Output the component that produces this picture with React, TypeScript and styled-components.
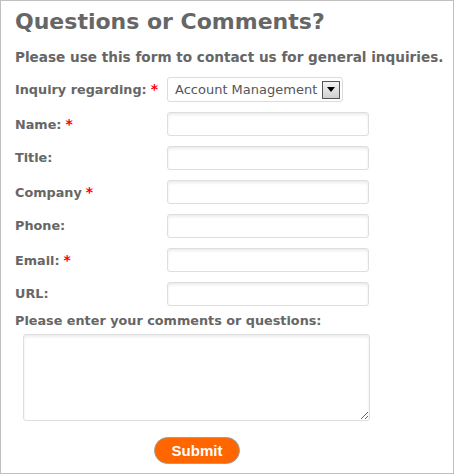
import React from "react";
import styled, { createGlobalStyle } from "styled-components";

const Global = createGlobalStyle`
  html, body { margin: 0; padding: 0; background: #fff; }
  * { box-sizing: border-box; }
`;

const Panel = styled.div`
  width: 454px;
  height: 474px;
  border: 1px solid #c0c0c0;
  padding: 8px 0 0 14px;
  font-family: "DejaVu Sans", Verdana, sans-serif;
  color: #666;
`;

const Heading = styled.h2`
  margin: 0;
  font-size: 22px;
  line-height: 26px;
  font-weight: bold;
`;

const Intro = styled.p`
  margin: 13px 0 0 0;
  font-size: 13.6px;
  line-height: 18px;
  font-weight: bold;
  white-space: nowrap;
`;

const Form = styled.form`
  display: grid;
  grid-template-columns: 152px 202px;
  row-gap: 10px;
  margin-top: 11px;
  align-items: center;
`;

const Label = styled.label`
  font-size: 12.8px;
  font-weight: bold;
  line-height: 16px;
  white-space: nowrap;
`;

const Req = styled.span`
  color: #f00;
  margin-left: 4px;
  font-size: 14px;
`;

const SelectBox = styled.div`
  width: 176px;
  height: 25px;
  border: 1px solid #dcdcdc;
  border-radius: 3px;
  display: flex;
  align-items: center;
  justify-content: space-between;
  padding: 0 2px 0 7px;
  font-size: 13px;
  color: #555;
  background: #fff;
`;

const Arrow = styled.span`
  width: 18px;
  height: 18px;
  border: 1px solid #555;
  background: linear-gradient(#f4f4f4, #d0d0d0);
  display: flex;
  align-items: center;
  justify-content: center;
`;

const Input = styled.input`
  width: 202px;
  height: 24px;
  border: 1px solid #dedede;
  border-radius: 3px;
  box-shadow: inset 0 2px 3px rgba(0, 0, 0, 0.08);
  background: #fff;
  font-family: inherit;
  outline: none;
`;

const CommentsLabel = styled(Label)`
  display: block;
  margin-top: 7px;
`;

const TextArea = styled.textarea`
  display: block;
  width: 347px;
  height: 87px;
  margin: 5px 0 0 8px;
  border: 1px solid #dedede;
  border-radius: 3px;
  box-shadow: inset 0 2px 3px rgba(0, 0, 0, 0.08);
  font-family: inherit;
  outline: none;
  resize: both;
`;

const ButtonRow = styled.div`
  padding: 16px 0 0 139px;
`;

const Submit = styled.button`
  display: block;
  width: 86px;
  height: 27px;
  border-radius: 14px;
  border: 1px solid #a0a0a0;
  background: #ff6600;
  color: #fff;
  font-family: "Liberation Sans", Arial, sans-serif;
  font-weight: bold;
  font-size: 15px;
  padding: 0;
  cursor: pointer;
`;

const fields: { label: string; req: boolean; colon: boolean }[] = [
  { label: "Name", req: true, colon: true },
  { label: "Title", req: false, colon: true },
  { label: "Company", req: true, colon: false },
  { label: "Phone", req: false, colon: true },
  { label: "Email", req: true, colon: true },
  { label: "URL", req: false, colon: true },
];

export default function App() {
  return (
    <>
      <Global />
      <Panel>
        <Heading>Questions or Comments?</Heading>
        <Intro>Please use this form to contact us for general inquiries.</Intro>
        <Form onSubmit={(e) => e.preventDefault()}>
          <Label>
            Inquiry regarding:<Req>*</Req>
          </Label>
          <SelectBox>
            <span>Account Management</span>
            <Arrow>
              <svg width="8" height="5" viewBox="0 0 8 5">
                <path d="M0 0H8L4 5Z" fill="#000" />
              </svg>
            </Arrow>
          </SelectBox>
          {fields.map((f) => (
            <React.Fragment key={f.label}>
              <Label>
                {f.label}
                {f.colon ? ":" : ""}
                {f.req && <Req>*</Req>}
              </Label>
              <Input type="text" />
            </React.Fragment>
          ))}
        </Form>
        <CommentsLabel>Please enter your comments or questions:</CommentsLabel>
        <TextArea />
        <ButtonRow>
          <Submit type="submit">Submit</Submit>
        </ButtonRow>
      </Panel>
    </>
  );
}
